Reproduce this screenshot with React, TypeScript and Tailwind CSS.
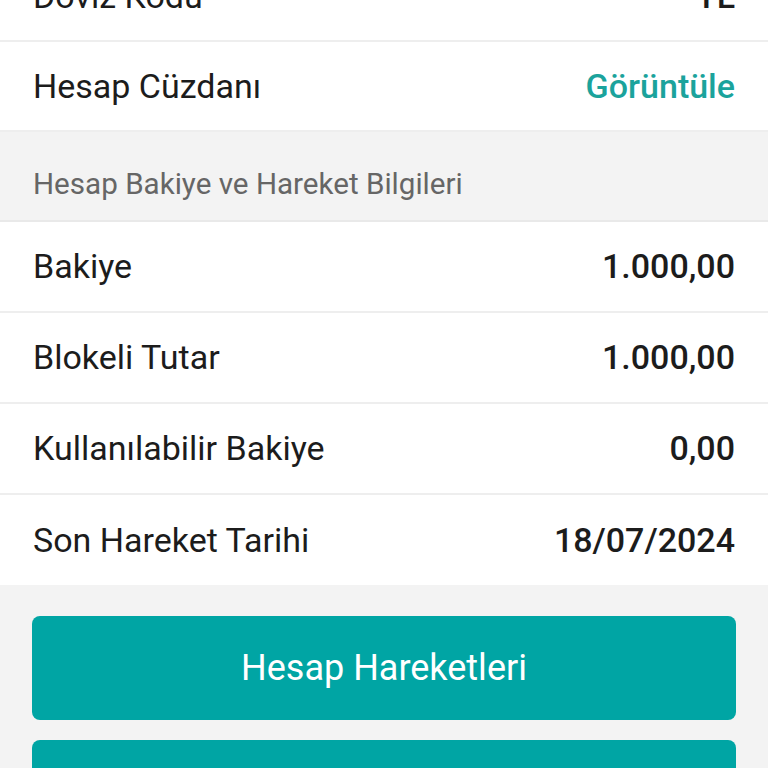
import React from "react";

// Account detail rows
const balanceRows = [
  { label: "Bakiye", value: "1.000,00" },
  { label: "Blokeli Tutar", value: "1.000,00" },
  { label: "Kullanılabilir Bakiye", value: "0,00" },
  { label: "Son Hareket Tarihi", value: "18/07/2024" },
];

function Row({
  label,
  value,
  link,
  last,
  tall,
}: {
  label: string;
  value: string;
  link?: boolean;
  last?: boolean;
  tall?: boolean;
}) {
  return (
    <div
      className={`flex items-center justify-between bg-white px-[33px] ${
        tall ? "h-[91px]" : "h-[90px]"
      } ${last ? "" : "border-b-2 border-[#eeeeee]"}`}
    >
      <span className="text-[34px] text-[#1c1c1c]">{label}</span>
      <span className={`text-[34px] font-medium ${link ? "text-[#1ba39c]" : "text-[#1c1c1c]"}`}>
        {value}
      </span>
    </div>
  );
}

export default function App() {
  return (
    <div
      className="h-[768px] w-[768px] overflow-hidden bg-[#f3f3f3]"
      style={{ fontFamily: "Roboto, 'Noto Sans', sans-serif" }}
    >
      <div className="mt-[-48px]">
        <Row label="Döviz Kodu" value="TL" />
        <Row label="Hesap Cüzdanı" value="Görüntüle" link />

        {/* Section header */}
        <div className="flex h-[90px] items-center bg-[#f3f3f3] px-[33px] pt-[16px] border-b-2 border-[#e9e9e9]">
          <span className="text-[29.6px] text-[#666666]">Hesap Bakiye ve Hareket Bilgileri</span>
        </div>

        {balanceRows.map((r, i) => (
          <Row
            key={r.label}
            label={r.label}
            value={r.value}
            tall={i < balanceRows.length - 1}
            last={i === balanceRows.length - 1}
          />
        ))}

        {/* Actions */}
        <div className="flex flex-col gap-5 px-[32px] pt-[31px]">
          <button className="flex h-[104px] items-center justify-center rounded-lg bg-[#00a5a4] text-[36px] text-white">
            Hesap Hareketleri
          </button>
          <button className="flex h-[104px] items-center justify-center rounded-lg bg-[#00a5a4] text-[36px] text-white">
            Hesap Detayı
          </button>
        </div>
      </div>
    </div>
  );
}
